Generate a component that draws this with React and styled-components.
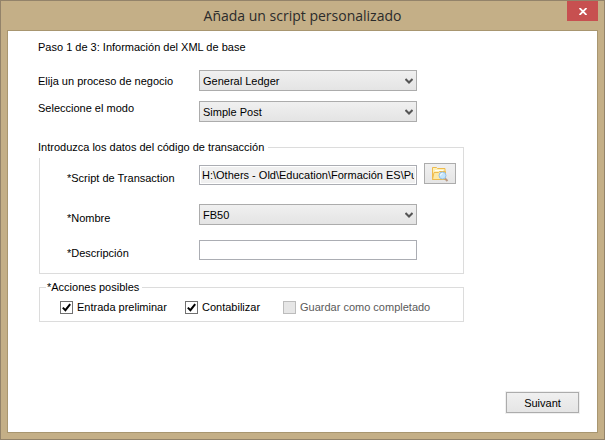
import React, { useState } from "react";
import styled, { createGlobalStyle } from "styled-components";

export default function App() {
  const [actions, setActions] = useState({ draft: true, post: true });
  const toggle = (key) => setActions({ ...actions, [key]: !actions[key] });

  return (
    <>
      <GlobalStyle />
      <Window>
        <TitleBar>
          <Title>Añada un script personalizado</Title>
          <CloseButton type="button" aria-label="Cerrar">
            <svg width="8" height="7" viewBox="0 0 8 7">
              <path d="M0.5 0L7.5 7M7.5 0L0.5 7" stroke="#fff" strokeWidth="1.8" />
            </svg>
          </CloseButton>
        </TitleBar>
        <Body>
          <Form>
            <Step>Paso 1 de 3: Información del XML de base</Step>
            <Row $label={161} $top={16} $align="center">
              <Label htmlFor="process">Elija un proceso de negocio</Label>
              <Dropdown id="process" value="General Ledger" />
            </Row>
            <Row $label={161} $top={10} $align="start">
              <Label htmlFor="mode">Seleccione el modo</Label>
              <Dropdown id="mode" value="Simple Post" />
            </Row>

            <Group $top={14}>
              <WideLegend>Introduzca los datos del código de transacción</WideLegend>
              <GroupFields>
                <Row $label={132} $top={5} $align="end">
                  <Label htmlFor="script">*Script de Transaction</Label>
                  <PathFields>
                    <PathInput
                      id="script"
                      readOnly
                      value="H:\Others - Old\Education\Formación ES\Publicar"
                    />
                    <BrowseButton type="button" aria-label="Examinar">
                      <FolderIcon />
                    </BrowseButton>
                  </PathFields>
                </Row>
                <Row $label={132} $top={19} $align="end">
                  <Label htmlFor="name">*Nombre</Label>
                  <Dropdown id="name" value="FB50" />
                </Row>
                <Row $label={132} $top={15} $align="end">
                  <Label htmlFor="description">*Descripción</Label>
                  <TextInput id="description" />
                </Row>
              </GroupFields>
            </Group>

            <Group $top={6}>
              <Legend>*Acciones posibles</Legend>
              <Checks>
                <CheckLabel>
                  <CheckBox checked={actions.draft} onChange={() => toggle("draft")} />
                  Entrada preliminar
                </CheckLabel>
                <CheckLabel>
                  <CheckBox checked={actions.post} onChange={() => toggle("post")} />
                  Contabilizar
                </CheckLabel>
                <CheckLabel $disabled>
                  <CheckBox disabled />
                  Guardar como completado
                </CheckLabel>
              </Checks>
            </Group>
          </Form>
          <Footer>
            <NextButton type="button">Suivant</NextButton>
          </Footer>
        </Body>
      </Window>
    </>
  );
}

function Dropdown({ id, value }) {
  return (
    <SelectBox>
      <Select id={id} defaultValue={value}>
        <option>{value}</option>
      </Select>
      <svg width="8" height="6" viewBox="0 0 8 6">
        <path d="M0.5 1L4 4.5L7.5 1" fill="none" stroke="#555" strokeWidth="2" />
      </svg>
    </SelectBox>
  );
}

function CheckBox(props) {
  return (
    <Tick>
      <input type="checkbox" {...props} />
      {props.checked && (
        <svg width="9" height="9" viewBox="0 0 9 9">
          <path d="M0.8 4.6L3.4 7.2L8.2 1.2" fill="none" stroke="#000" strokeWidth="2" />
        </svg>
      )}
    </Tick>
  );
}

function FolderIcon() {
  return (
    <svg width="18" height="16" viewBox="0 0 18 16">
      <path d="M1.5 13.5V1.5h4l1 1h7.500v11z" fill="#fdf0b8" stroke="#eebb4d" />
      <path d="M4 4.500h8" stroke="#fffdf2" />
      <path d="M1.500 13.500L3 6.500h4.500l1-1h6v8z" fill="#fce9a6" stroke="#eebb4d" />
      <path d="M14 12.500L16.500 15" stroke="#b99a86" strokeWidth="2" />
      <circle cx="11.500" cy="9.500" r="3.500" fill="#c3e4fb" stroke="#96bfe3" />
      <path d="M9.500 9.500a2 2 0 0 1 2-2" fill="none" stroke="#fff" />
    </svg>
  );
}

const GlobalStyle = createGlobalStyle`
  * {
    box-sizing: border-box;
  }
  body {
    margin: 0;
    color: #000;
    font: 11px/14px "Liberation Sans", Arial, sans-serif;
  }
  button, input, select {
    font: inherit;
    color: inherit;
    margin: 0;
  }
  svg {
    display: block;
  }
`;

const Window = styled.main`
  display: flex;
  flex-direction: column;
  min-height: 100vh;
  padding: 0 6px 6px;
  background: #c4af87;
  border: 1px solid #93836a;
`;

const TitleBar = styled.header`
  display: grid;
  grid-template-columns: 31px 1fr 31px;
  height: 29px;
`;

const Title = styled.h1`
  grid-column: 2;
  margin: 0;
  font: 400 14px/29px "Open Sans", "Noto Sans", sans-serif;
  color: #2b2b2b;
  text-align: center;
`;

const CloseButton = styled.button`
  display: flex;
  align-items: center;
  justify-content: center;
  height: 20px;
  padding: 0;
  background: #c75050;
  border: 0;
`;

const Body = styled.section`
  display: flex;
  flex: 1;
  flex-direction: column;
  justify-content: space-between;
  padding: 9px 18px 19px 30px;
  background: #fff;
  border: 1px solid #a89670;
`;

const Form = styled.form`
  max-width: 426px;
`;

const Step = styled.p`
  margin: 0;
`;

const Row = styled.div`
  display: grid;
  grid-template-columns: ${({ $label }) => $label}px 1fr;
  align-items: ${({ $align }) => $align};
  margin-top: ${({ $top }) => $top}px;
`;

const Label = styled.label`
  white-space: nowrap;
`;

const SelectBox = styled.div`
  position: relative;
  width: 218px;
  svg {
    position: absolute;
    top: 8px;
    right: 4px;
    pointer-events: none;
  }
`;

const Select = styled.select`
  display: block;
  width: 100%;
  height: 21px;
  padding: 0 3px;
  appearance: none;
  background: linear-gradient(#f0f0f0, #e4e4e4);
  border: 1px solid #acacac;
  border-radius: 0;
`;

const TextInput = styled.input`
  width: 218px;
  height: 20px;
  padding: 0 3px;
  background: #fff;
  border: 1px solid #abadb3;
`;

const PathFields = styled.div`
  display: flex;
  gap: 7px;
  align-items: flex-end;
  height: 22px;
`;

const PathInput = styled(TextInput)`
  padding: 0 2px;
  background: #f0f0f0;
  box-shadow: inset 0 0 0 1px #fff;
`;

const BrowseButton = styled.button`
  display: flex;
  align-items: center;
  justify-content: center;
  align-self: flex-start;
  width: 32px;
  height: 21px;
  padding: 0;
  background: linear-gradient(#f0f0f0, #e5e5e5);
  border: 1px solid #acacac;
`;

const Group = styled.fieldset`
  min-width: 0;
  margin: ${({ $top }) => $top}px 0 0 1px;
  padding: 0;
  border: 1px solid #dcdcdc;
`;

const Legend = styled.legend`
  margin-left: 6px;
  padding: 0 3px 0 1px;
  background: #fff;
`;

const WideLegend = styled(Legend)`
  margin-left: -2px;
  padding: 0 4px 0 0;
  line-height: 22px;
`;

const GroupFields = styled.div`
  padding: 0 7px 13px 27px;
`;

const Checks = styled.div`
  display: grid;
  grid-template-columns: 125px 98px 1fr;
  padding: 7px 0 7px 20px;
`;

const CheckLabel = styled.label`
  display: flex;
  gap: 4px;
  height: 13px;
  line-height: 13px;
  white-space: nowrap;
  color: ${({ $disabled }) => ($disabled ? "#5a5a5a" : "#000")};
`;

const Tick = styled.span`
  position: relative;
  width: 13px;
  height: 13px;
  input {
    display: block;
    width: 13px;
    height: 13px;
    appearance: none;
    background: #fff;
    border: 1px solid #707070;
  }
  input:disabled {
    background: #e6e6e6;
    border-color: #bcbcbc;
  }
  svg {
    position: absolute;
    top: 2px;
    left: 2px;
    pointer-events: none;
  }
`;

const Footer = styled.footer`
  display: flex;
  justify-content: flex-end;
`;

const NextButton = styled.button`
  width: 73px;
  height: 21px;
  padding: 0;
  background: linear-gradient(#f0f0f0, #e5e5e5);
  border: 1px solid #acacac;
  box-shadow: 0 0 0 1px #f0f0f0;
`;
